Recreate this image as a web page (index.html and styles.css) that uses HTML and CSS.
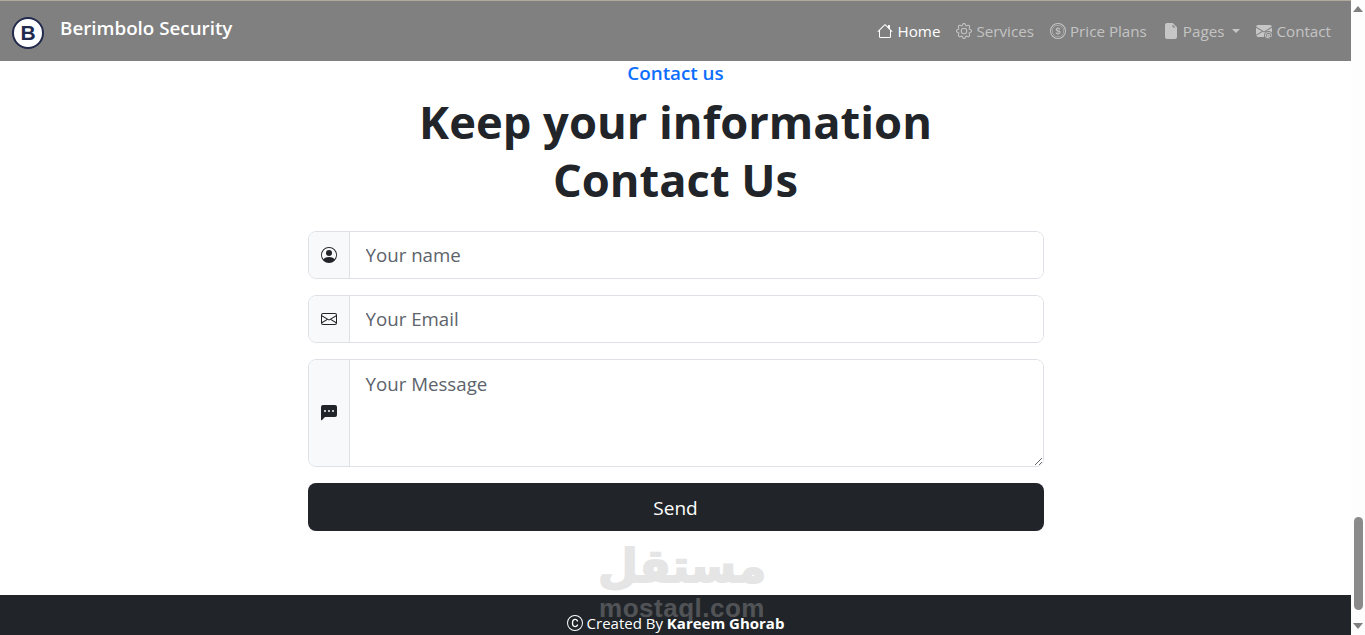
FILE: index.html
```html
<!DOCTYPE html>
<html lang="en">
<head>
    <meta charset="UTF-8">
    <meta name="viewport" content="width=device-width, initial-scale=1.0">
    <title>Berimbolo Security</title>
    <link rel="stylesheet" href="styles.css">
</head>
<body>
    <div class="page">
        <!-- Navbar -->
        <nav class="navbar">
            <a href="#" class="brand">
                <span class="brand-logo">B</span>
                <span class="brand-name">Berimbolo Security</span>
            </a>
            <ul class="nav-links">
                <li><a href="#" class="active">
                    <svg class="bi" viewBox="0 0 16 16"><path d="M8.707 1.5a1 1 0 0 0-1.414 0L.646 8.146a.5.5 0 0 0 .708.708L2 8.207V13.5A1.5 1.5 0 0 0 3.5 15h9a1.5 1.5 0 0 0 1.5-1.5V8.207l.646.647a.5.5 0 0 0 .708-.708L13 5.793V2.5a.5.5 0 0 0-.5-.5h-1a.5.5 0 0 0-.5.5v1.293L8.707 1.5ZM13 7.207V13.5a.5.5 0 0 1-.5.5h-9a.5.5 0 0 1-.5-.5V7.207l5-5 5 5Z"/></svg>
                    Home</a></li>
                <li><a href="#">
                    <svg class="bi" viewBox="0 0 16 16"><path d="M8 4.754a3.246 3.246 0 1 0 0 6.492 3.246 3.246 0 0 0 0-6.492zM5.754 8a2.246 2.246 0 1 1 4.492 0 2.246 2.246 0 0 1-4.492 0z"/><path d="M9.796 1.343c-.527-1.79-3.065-1.79-3.592 0l-.094.319a.873.873 0 0 1-1.255.52l-.292-.16c-1.64-.892-3.433.902-2.54 2.541l.159.292a.873.873 0 0 1-.52 1.255l-.319.094c-1.79.527-1.79 3.065 0 3.592l.319.094a.873.873 0 0 1 .52 1.255l-.16.292c-.892 1.64.901 3.434 2.541 2.54l.292-.159a.873.873 0 0 1 1.255.52l.094.319c.527 1.79 3.065 1.79 3.592 0l.094-.319a.873.873 0 0 1 1.255-.52l.292.16c1.64.893 3.434-.902 2.54-2.541l-.159-.292a.873.873 0 0 1 .52-1.255l.319-.094c1.79-.527 1.79-3.065 0-3.592l-.319-.094a.873.873 0 0 1-.52-1.255l.16-.292c.893-1.64-.902-3.433-2.541-2.54l-.292.159a.873.873 0 0 1-1.255-.52l-.094-.319zm-2.633.283c.246-.835 1.428-.835 1.674 0l.094.319a1.873 1.873 0 0 0 2.693 1.115l.291-.16c.764-.415 1.6.42 1.184 1.185l-.159.292a1.873 1.873 0 0 0 1.116 2.692l.318.094c.835.246.835 1.428 0 1.674l-.319.094a1.873 1.873 0 0 0-1.115 2.693l.16.291c.415.764-.42 1.6-1.185 1.184l-.291-.159a1.873 1.873 0 0 0-2.693 1.116l-.094.318c-.246.835-1.428.835-1.674 0l-.094-.319a1.873 1.873 0 0 0-2.692-1.115l-.292.16c-.764.415-1.6-.42-1.184-1.185l.159-.291A1.873 1.873 0 0 0 1.945 8.93l-.319-.094c-.835-.246-.835-1.428 0-1.674l.319-.094A1.873 1.873 0 0 0 3.06 4.377l-.16-.292c-.415-.764.42-1.6 1.185-1.184l.292.159a1.873 1.873 0 0 0 2.692-1.115l.094-.319z"/></svg>
                    Services</a></li>
                <li><a href="#">
                    <svg class="bi" viewBox="0 0 16 16"><path d="M5.5 9.511c.076.954.83 1.697 2.182 1.785V12h.6v-.709c1.4-.098 2.218-.846 2.218-1.932 0-.987-.626-1.496-1.745-1.76l-.473-.112V5.57c.6.068.982.396 1.074.85h1.052c-.076-.919-.864-1.638-2.126-1.716V4h-.6v.719c-1.195.117-2.01.836-2.01 1.853 0 .9.606 1.472 1.613 1.707l.397.098v2.034c-.615-.093-1.022-.43-1.114-.9H5.5zm2.177-2.166c-.59-.137-.91-.416-.91-.836 0-.47.345-.822.915-.925v1.76h-.005zm.692 1.193c.717.166 1.048.435 1.048.91 0 .542-.412.914-1.135 1.017V8.504l.087.02z"/><path d="M8 15A7 7 0 1 1 8 1a7 7 0 0 1 0 14zm0 1A8 8 0 1 0 8 0a8 8 0 0 0 0 16z"/><path d="M8 13.5a5.5 5.5 0 1 1 0-11 5.5 5.5 0 0 1 0 11zm0 .5A6 6 0 1 0 8 2a6 6 0 0 0 0 12z"/></svg>
                    Price Plans</a></li>
                <li><a href="#">
                    <svg class="bi" viewBox="0 0 16 16"><path d="M4 0h5.293A1 1 0 0 1 10 .293L13.707 4a1 1 0 0 1 .293.707V14a2 2 0 0 1-2 2H4a2 2 0 0 1-2-2V2a2 2 0 0 1 2-2zm5.5 1.5v2a1 1 0 0 0 1 1h2l-3-3z"/></svg>
                    Pages <span class="caret"></span></a></li>
                <li><a href="#">
                    <svg class="bi" viewBox="0 0 16 16"><path d="M2 2A2 2 0 0 0 .05 3.555L8 8.414l7.95-4.859A2 2 0 0 0 14 2H2Zm-2 9.8V4.698l5.803 3.546L0 11.801Zm6.761-2.97-6.57 4.026A2 2 0 0 0 2 14h6.256A4.493 4.493 0 0 1 8 12.5a4.49 4.49 0 0 1 1.606-3.446l-.367-.225L8 9.586l-1.239-.757ZM16 9.671V4.697l-5.803 3.546.338.208A4.482 4.482 0 0 1 12.5 8c1.414 0 2.675.652 3.5 1.671Z"/><path d="M15.834 12.244c0 1.168-.577 2.025-1.587 2.025-.503 0-1.002-.228-1.12-.648h-.043c-.118.416-.543.643-1.015.643-.77 0-1.259-.542-1.259-1.434v-.529c0-.844.481-1.4 1.26-1.4.585 0 .87.333.953.63h.03v-.568h.905v2.19c0 .272.18.42.411.42.315 0 .639-.415.639-1.39v-.118c0-1.277-.95-2.326-2.484-2.326h-.02c-1.582 0-2.46.993-2.46 2.363v.19c0 1.456.847 2.268 2.37 2.268.494 0 .957-.08 1.242-.19v.783c-.294.11-.795.196-1.242.196-2.098 0-3.355-1.252-3.355-3.108v-.255c0-1.772 1.297-3.02 3.45-3.02 2.003 0 3.33 1.293 3.33 3.15v.104Zm-4.121.25v.127c0 .432.18.61.503.61.334 0 .503-.17.503-.61v-.127c0-.438-.17-.61-.503-.61-.323 0-.503.172-.503.61Z"/></svg>
                    Contact</a></li>
            </ul>
        </nav>

        <!-- Contact section -->
        <section class="contact">
            <p class="contact-label">Contact us</p>
            <h1>Keep your information<br>Contact Us</h1>
            <form class="contact-form">
                <div class="input-group">
                    <span class="input-icon">
                        <svg class="bi" viewBox="0 0 16 16"><path d="M11 6a3 3 0 1 1-6 0 3 3 0 0 1 6 0z"/><path d="M0 8a8 8 0 1 1 16 0A8 8 0 0 1 0 8zm8-7a7 7 0 0 0-5.468 11.37C3.242 11.226 4.805 10 8 10s4.757 1.225 5.468 2.37A7 7 0 0 0 8 1z"/></svg>
                    </span>
                    <input type="text" placeholder="Your name">
                </div>
                <div class="input-group">
                    <span class="input-icon">
                        <svg class="bi" viewBox="0 0 16 16"><path d="M0 4a2 2 0 0 1 2-2h12a2 2 0 0 1 2 2v8a2 2 0 0 1-2 2H2a2 2 0 0 1-2-2V4Zm2-1a1 1 0 0 0-1 1v.217l7 4.2 7-4.2V4a1 1 0 0 0-1-1H2Zm13 2.383-4.708 2.825L15 11.105V5.383Zm-.034 6.876-5.64-3.471L8 9.583l-1.326-.795-5.64 3.47A1 1 0 0 0 2 13h12a1 1 0 0 0 .966-.741ZM1 11.105l4.708-2.897L1 5.383v5.722Z"/></svg>
                    </span>
                    <input type="email" placeholder="Your Email">
                </div>
                <div class="input-group">
                    <span class="input-icon">
                        <svg class="bi" viewBox="0 0 16 16"><path d="M0 2a2 2 0 0 1 2-2h12a2 2 0 0 1 2 2v8a2 2 0 0 1-2 2H4.414a1 1 0 0 0-.707.293L.854 15.146A.5.5 0 0 1 0 14.793V2zm5 4a1 1 0 1 0-2 0 1 1 0 0 0 2 0zm4 0a1 1 0 1 0-2 0 1 1 0 0 0 2 0zm3 1a1 1 0 1 0 0-2 1 1 0 0 0 0 2z"/></svg>
                    </span>
                    <textarea placeholder="Your Message"></textarea>
                </div>
                <button type="button">Send</button>
            </form>
        </section>

        <footer class="footer">
            <svg class="bi" viewBox="0 0 16 16"><path d="M1 8a7 7 0 1 0 14 0A7 7 0 0 0 1 8Zm15 0A8 8 0 1 1 0 8a8 8 0 0 1 16 0ZM8.146 4.992c-1.212 0-1.927.92-1.927 2.502v1.06c0 1.571.703 2.462 1.927 2.462.979 0 1.641-.586 1.729-1.418h1.295v.093c-.1 1.448-1.354 2.467-3.03 2.467-2.091 0-3.269-1.336-3.269-3.603V7.482c0-2.261 1.201-3.638 3.27-3.638 1.681 0 2.935 1.054 3.029 2.572v.088H9.875c-.088-.879-.768-1.512-1.729-1.512Z"/></svg>
            <span class="footer-text">Created By <strong>Kareem Ghorab</strong></span>
        </footer>

        <!-- Site watermark, lies over the page -->
        <div class="watermark">
            <span class="watermark-ar" lang="ar" dir="rtl">مستقل</span>
            <span class="watermark-en">mostaql.com</span>
        </div>
    </div>

    <!-- Browser scrollbar -->
    <div class="scrollbar">
        <span class="arrow-up"></span>
        <span class="scroll-thumb"></span>
        <span class="arrow-down"></span>
    </div>
</body>
</html>
```

FILE: styles.css
```css
* {
    box-sizing: border-box;
}
html, body {
    height: 100%;
}
body {
    display: flex;
    margin: 0;
    overflow: hidden;
    background-color: white;
    color: #212529;
    font-family: "Open Sans", "Noto Sans", Arial, sans-serif;
    font-size: 16px;
}
.page {
    position: relative;
    flex: 1;
    min-width: 0;
    height: 635px;
    overflow: hidden;
}
.bi {
    width: 16px;
    height: 16px;
    fill: currentColor;
    flex-shrink: 0;
}

/* Navbar */
.navbar {
    display: flex;
    align-items: center;
    justify-content: space-between;
    height: 61px;
    padding: 0 20px 0 12px;
    background-color: #808080;
    border-top: 1px solid #b3a89c;
}
.brand {
    display: flex;
    align-items: center;
    gap: 16px;
    margin-top: -5px;
    color: white;
    text-decoration: none;
}
.brand-logo {
    display: flex;
    align-items: center;
    justify-content: center;
    width: 32px;
    height: 32px;
    margin-top: 8px;
    background-color: white;
    border: 2px solid #212a4d;
    border-radius: 50%;
    color: #212a4d;
    font-family: "Liberation Sans", Arial, sans-serif;
    font-size: 21px;
    font-weight: bold;
}
.brand-name {
    margin-bottom: 2px;
    font-size: 18.8px;
    font-weight: 600;
}
.nav-links {
    display: flex;
    gap: 16px;
    margin: 0;
    padding: 0;
    list-style: none;
}
.nav-links a {
    display: flex;
    align-items: center;
    gap: 4px;
    color: rgba(255, 255, 255, 0.55);
    font-size: 15.2px;
    text-decoration: none;
}
.nav-links a.active {
    color: white;
}
.caret {
    width: 0;
    height: 0;
    margin-left: 4px;
    border-top: 4px solid currentColor;
    border-left: 4px solid transparent;
    border-right: 4px solid transparent;
}

/* Contact section */
.contact {
    height: 534px;
    text-align: center;
}
.contact-label {
    margin: 0;
    color: #0d6efd;
    font-size: 18.8px;
    font-weight: 600;
    line-height: 24px;
}
.contact h1 {
    margin: 8px 0 23px;
    font-size: 45.3px;
    font-weight: 700;
    line-height: 57.6px;
}
.contact-form {
    display: flex;
    flex-direction: column;
    gap: 16px;
    width: 736px;
    margin: 0 auto;
}
.input-group {
    display: flex;
    border: 1px solid #dee2e6;
    border-radius: 8px;
    overflow: hidden;
}
.input-icon {
    display: flex;
    align-items: center;
    justify-content: center;
    width: 41px;
    background-color: #f8f9fa;
    border-right: 1px solid #dee2e6;
}
.input-group input,
.input-group textarea {
    flex: 1;
    padding: 0 16px;
    border: none;
    outline: none;
    color: #212529;
    font-family: inherit;
    font-size: 18.7px;
}
.input-group input {
    height: 46px;
    padding-bottom: 1px;
}
.input-group textarea {
    display: block;
    height: 106px;
    padding-top: 10px;
    line-height: 28px;
}
.input-group input::placeholder,
.input-group textarea::placeholder {
    color: #5c636a;
    opacity: 1;
}
.contact-form button {
    height: 48px;
    padding-top: 2px;
    background-color: #212529;
    border: none;
    border-radius: 8px;
    color: white;
    font-family: inherit;
    font-size: 19px;
    cursor: pointer;
}

/* Footer */
.footer {
    display: flex;
    align-items: center;
    justify-content: center;
    gap: 4px;
    height: 40px;
    padding-top: 16px;
    background-color: #212529;
    color: white;
    font-size: 15px;
}
.footer-text {
    line-height: 14px;
}

/* Watermark */
.watermark {
    position: absolute;
    top: 536px;
    left: 566px;
    width: 232px;
    display: flex;
    flex-direction: column;
    align-items: center;
    color: #b2b2b2;
    opacity: 0.33;
    font-weight: bold;
    pointer-events: none;
}
.watermark-ar {
    font-family: "DejaVu Sans", sans-serif;
    font-size: 46px;
    line-height: 60px;
    -webkit-text-stroke: 2px #b2b2b2;
}
.watermark-en {
    margin-top: 2px;
    font-family: "Liberation Sans", Arial, sans-serif;
    font-size: 26px;
    letter-spacing: 0.5px;
    line-height: 20px;
}

/* Scrollbar */
.scrollbar {
    display: flex;
    flex-direction: column;
    align-items: center;
    flex: 0 0 14px;
    height: 635px;
    padding: 6px 0 0;
    background-color: #fdfdfd;
}
.arrow-up {
    border-bottom: 6px solid #7f7f7f;
    border-left: 5px solid transparent;
    border-right: 5px solid transparent;
}
.arrow-down {
    margin-top: 13px;
    border-top: 6px solid #7f7f7f;
    border-left: 5px solid transparent;
    border-right: 5px solid transparent;
}
.scroll-thumb {
    width: 9px;
    height: 93px;
    margin-top: 505px;
    background-color: #8a8a8a;
    border-radius: 5px;
}
```
